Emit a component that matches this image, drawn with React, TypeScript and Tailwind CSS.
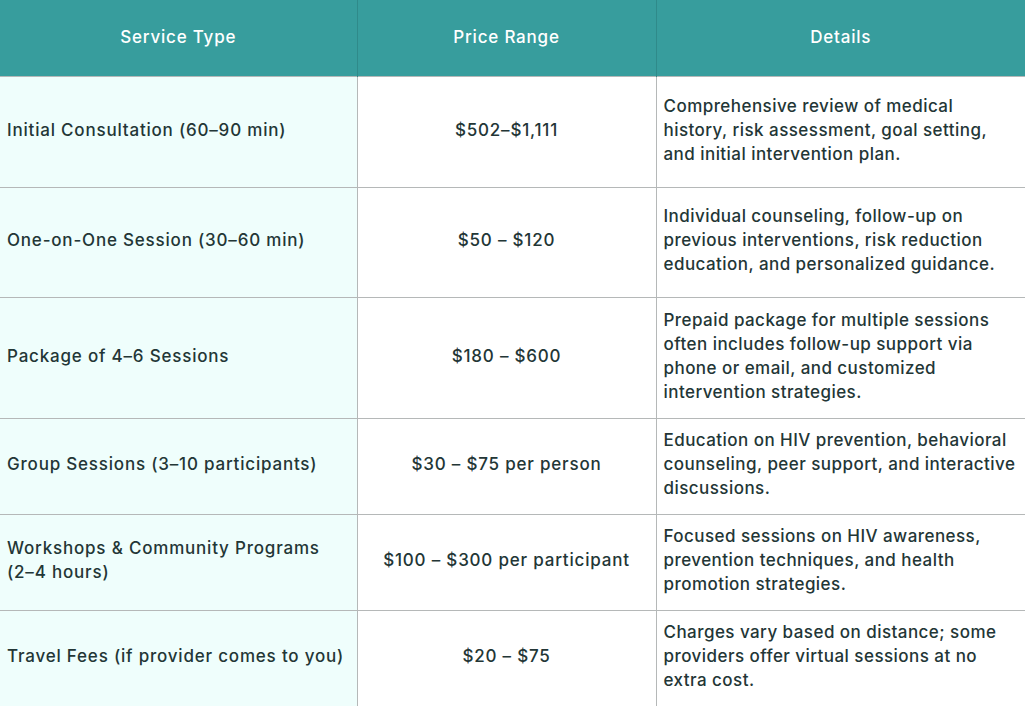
const rows = [
  {
    service: ["Initial Consultation (60–90 min)"],
    price: "$502–$1,111",
    details: ["Comprehensive review of medical", "history, risk assessment, goal setting,", "and initial intervention plan."],
    h: "h-[111px]",
  },
  {
    service: ["One-on-One Session (30–60 min)"],
    price: "$50 – $120",
    details: ["Individual counseling, follow-up on", "previous interventions, risk reduction", "education, and personalized guidance."],
    h: "h-[110px]",
  },
  {
    service: ["Package of 4–6 Sessions"],
    price: "$180 – $600",
    details: [
      "Prepaid package for multiple sessions",
      "often includes follow-up support via",
      "phone or email, and customized",
      "intervention strategies.",
    ],
    h: "h-[121px]",
  },
  {
    service: ["Group Sessions (3–10 participants)"],
    price: "$30 – $75 per person",
    details: ["Education on HIV prevention, behavioral", "counseling, peer support, and interactive", "discussions."],
    h: "h-[96px]",
  },
  {
    service: ["Workshops & Community Programs", "(2–4 hours)"],
    price: "$100 – $300 per participant",
    details: ["Focused sessions on HIV awareness,", "prevention techniques, and health", "promotion strategies."],
    h: "h-[96px]",
  },
  {
    service: ["Travel Fees (if provider comes to you)"],
    price: "$20 – $75",
    details: ["Charges vary based on distance; some", "providers offer virtual sessions at no", "extra cost."],
    h: "h-[96px]",
  },
];

function Lines({ lines }: { lines: string[] }) {
  return (
    <>
      {lines.map((l) => (
        <span key={l} className="block whitespace-nowrap">
          {l}
        </span>
      ))}
    </>
  );
}

export default function App() {
  return (
    <div
      className="w-[1025px] bg-white text-[#233636]"
      style={{ fontFamily: "Inter, 'Noto Sans', sans-serif" }}
    >
      <table className="w-full table-fixed border-collapse text-[17px] font-medium leading-6 tracking-[0.8px]">
        <colgroup>
          <col className="w-[357px]" />
          <col className="w-[299px]" />
          <col className="w-[369px]" />
        </colgroup>
        <thead>
          <tr className="h-[76px] bg-[#379d9d] text-white">
            <th className="font-medium text-center pb-[2px]">Service Type</th>
            <th className="font-medium text-center pb-[2px] border-l border-[#2f8a8a]">Price Range</th>
            <th className="font-medium text-center pb-[2px] border-l border-[#2f8a8a]">Details</th>
          </tr>
        </thead>
        <tbody>
          {rows.map((r) => (
            <tr key={r.price} className={`${r.h} border-t border-[#b5b8b8]`}>
              <td className="bg-[#effefc] px-[7px] pb-1 align-middle">
                <Lines lines={r.service} />
              </td>
              <td className="border-l border-[#b5b8b8] px-[7px] pb-1 text-center align-middle">{r.price}</td>
              <td className="border-l border-[#b5b8b8] pl-[7px] pr-[4px] pb-1 align-middle tracking-[0.45px]">
                <Lines lines={r.details} />
              </td>
            </tr>
          ))}
        </tbody>
      </table>
    </div>
  );
}
